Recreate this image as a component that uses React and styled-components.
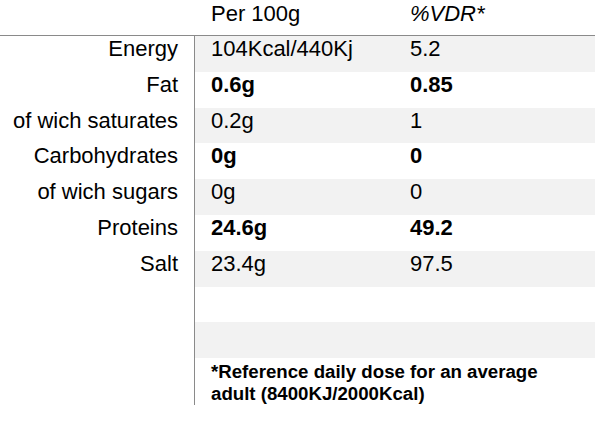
import React from 'react'
import styled, { createGlobalStyle } from 'styled-components'

const GlobalStyle = createGlobalStyle`
  body {
    margin: 0;
    background: #ffffff;
    font-family: "Liberation Sans", Arial, sans-serif;
    color: #000000;
  }
`

const Table = styled.div`
  width: 595px;
  display: grid;
  grid-template-columns: 195px 199px 201px;
`

const Head = styled.div`
  height: 34px;
  padding: 1px 0 0 16px;
  font-size: 22px;
  font-style: ${(p) => (p.italic ? 'italic' : 'normal')};
  border-bottom: 1px solid #8a8a8a;
`

const Label = styled.div`
  height: 35.8px;
  box-sizing: border-box;
  padding-right: 16px;
  text-align: right;
  font-size: 22px;
  line-height: 24px;
  padding-top: 1px;
  border-right: 1px solid #8a8a8a;
  white-space: nowrap;
`

const Cell = styled.div`
  height: 35.8px;
  box-sizing: border-box;
  padding: 1px 0 0 16px;
  font-size: 22px;
  line-height: 24px;
  font-weight: ${(p) => (p.bold ? 700 : 400)};
  background: ${(p) => (p.shaded ? '#f2f2f2' : '#ffffff')};
  white-space: nowrap;
`

const NoteSide = styled.div`
  border-right: 1px solid #8a8a8a;
`

const Note = styled.div`
  grid-column: 2 / 4;
  padding: 3px 40px 0 16px;
  font-size: 18.67px;
  line-height: 22px;
  font-weight: 700;
`

const rows = [
  { label: 'Energy', value: '104Kcal/440Kj', vdr: '5.2' },
  { label: 'Fat', value: '0.6g', vdr: '0.85', bold: true },
  { label: 'of wich saturates', value: '0.2g', vdr: '1' },
  { label: 'Carbohydrates', value: '0g', vdr: '0', bold: true },
  { label: 'of wich sugars', value: '0g', vdr: '0' },
  { label: 'Proteins', value: '24.6g', vdr: '49.2', bold: true },
  { label: 'Salt', value: '23.4g', vdr: '97.5' },
  { label: '', value: '', vdr: '' },
  { label: '', value: '', vdr: '' },
]

const App = () => {
  return (
    <>
      <GlobalStyle />
      <Table>
        <Head />
        <Head>Per 100g</Head>
        <Head italic>%VDR*</Head>
        {rows.map((r, i) => (
          <React.Fragment key={i}>
            <Label>{r.label}</Label>
            <Cell shaded={i % 2 === 0} bold={r.bold}>{r.value}</Cell>
            <Cell shaded={i % 2 === 0} bold={r.bold}>{r.vdr}</Cell>
          </React.Fragment>
        ))}
        <NoteSide />
        <Note>*Reference daily dose for an average adult (8400KJ/2000Kcal)</Note>
      </Table>
    </>
  )
}

export default App
